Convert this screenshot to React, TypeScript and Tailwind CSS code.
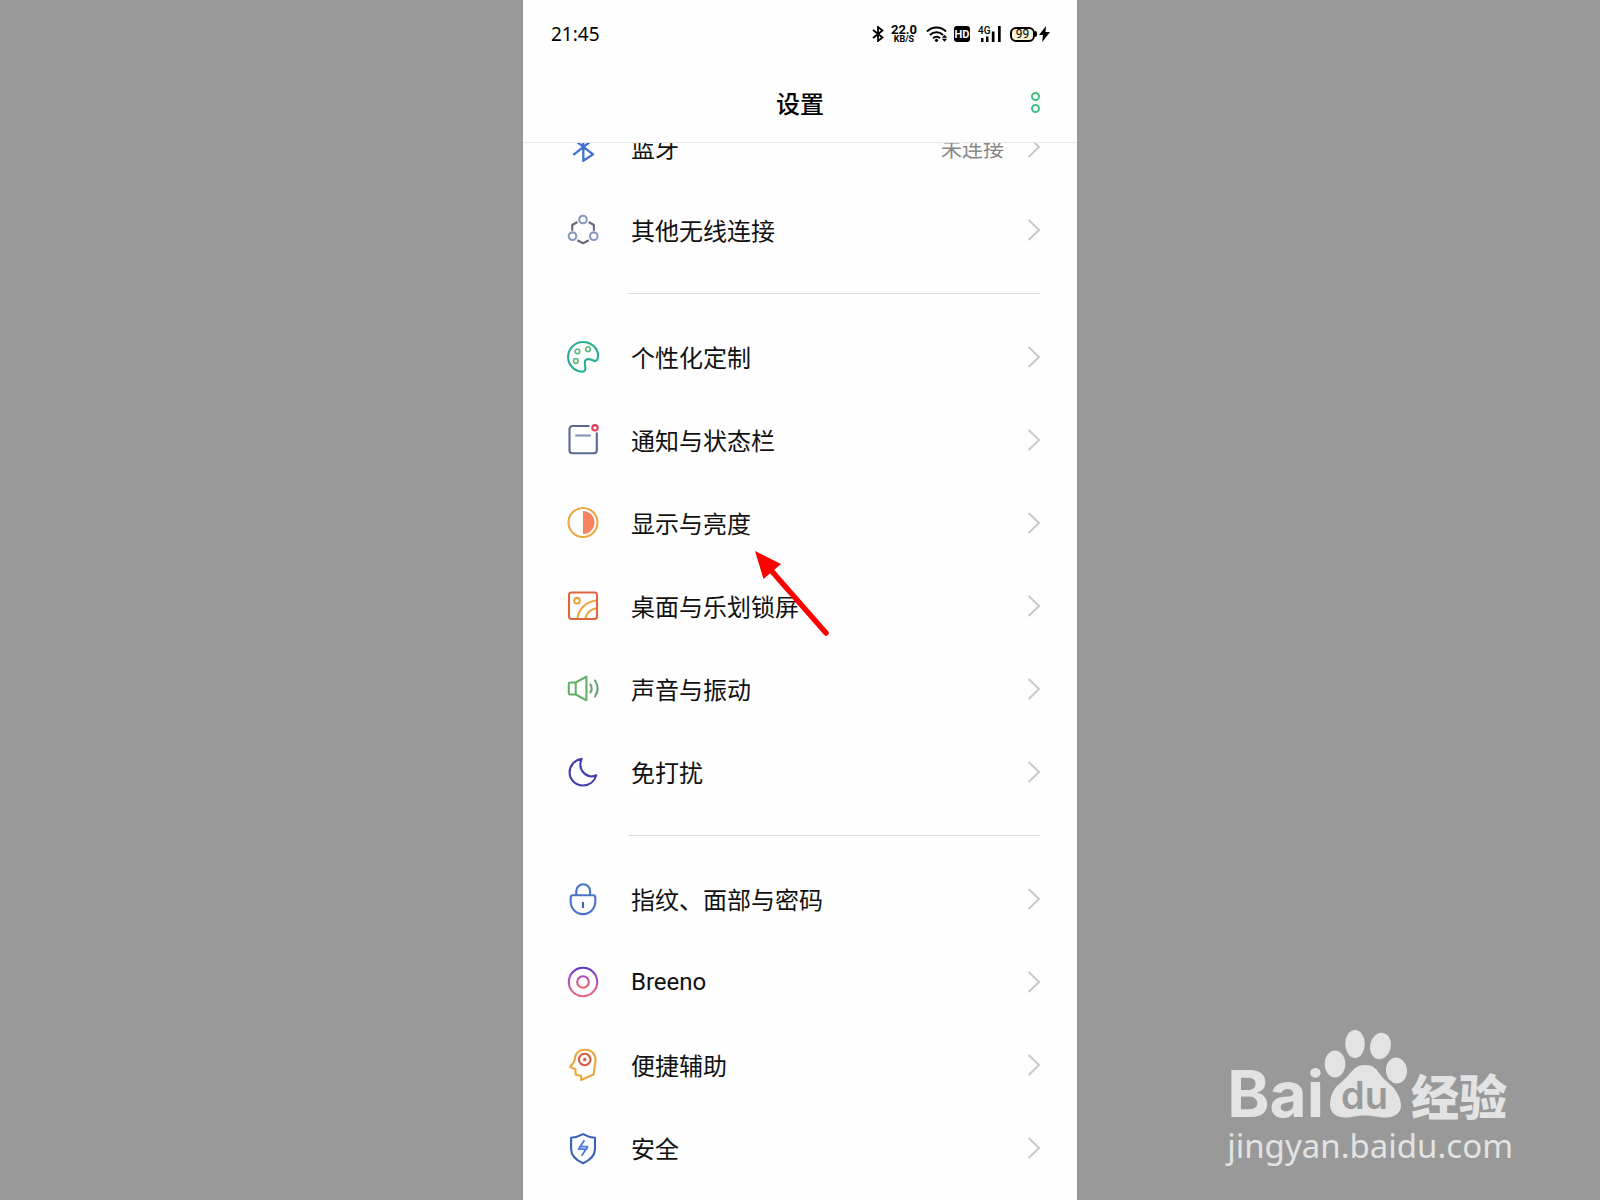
import React from 'react';
import { clsx } from 'clsx';

type IconProps = { children: React.ReactNode };

const Icon: React.FC<IconProps> = ({ children }) => (
  <svg className="size-8 shrink-0 overflow-visible" viewBox="0 0 32 32" fill="none" strokeWidth="2.1" strokeLinecap="round" strokeLinejoin="round" aria-hidden="true">
    {children}
  </svg>
);

const BluetoothIcon = () => (
  <Icon>
    <path stroke="#4570d3" strokeWidth="2.3" d="M7 8.5 26 23.4 16.3 29.8V1.5L26 8.5 7 23.4" />
  </Icon>
);

const WirelessIcon = () => (
  <Icon>
    <path stroke="#66697a" strokeLinecap="butt" d="M5.2 16.8V11l5.2-3M26.9 16.8V11l-5.2-3M10.3 26.3 16 29.2l5.8-2.9" />
    <g stroke="#8798bd">
      <circle cx="16" cy="5.5" r="3.8" />
      <circle cx="5.5" cy="22.2" r="3.8" />
      <circle cx="26.8" cy="22.2" r="3.8" />
    </g>
  </Icon>
);

const PaletteIcon = () => (
  <Icon>
    <path stroke="#25ae94" d="M14.8 30.7C7 30 1.1 23.7 1.1 16A14.9 14.9 0 0 1 16 1c8.4 0 15 6.4 15 13.6 0 4.6-1.9 6.4-4.6 4.9-4.2-2.3-8.6-1.9-8.6 2.2 0 2.6 1 4.3.4 6.8-.4 1.7-1.6 2.4-3.4 2.2Z" />
    <g stroke="#62bb86" strokeWidth="1.7">
      <circle cx="10.4" cy="10.4" r="2.3" />
      <circle cx="21" cy="8.2" r="2.3" />
      <circle cx="8.8" cy="20" r="2.3" />
    </g>
  </Icon>
);

const NotificationIcon = () => (
  <Icon>
    <path stroke="#5b6891" strokeLinecap="butt" d="M22.5 2h-17a3 3 0 0 0-3 3v21.3a3 3 0 0 0 3 3h21.3a3 3 0 0 0 3-3V8.5" />
    <path stroke="#8194bb" strokeLinecap="butt" d="M8.3 11.5h15.5" />
    <circle cx="28" cy="3.8" r="2.7" stroke="#d8405c" />
  </Icon>
);

const DisplayIcon = () => (
  <Icon>
    <circle cx="16" cy="15.5" r="14.5" stroke="#eaa840" />
    <path fill="#f6835f" d="M16 4a11.5 11.5 0 0 1 0 23Z" />
  </Icon>
);

const DesktopIcon = () => (
  <Icon>
    <g stroke="#eba63f">
      <circle cx="10" cy="10.7" r="2.8" />
      <path d="M10.5 28C12 19 19 11.5 29.5 10.5M18.5 28c1.5-5 5.5-9 11-9.8" />
    </g>
    <rect x="2" y="2.5" width="28" height="26.5" rx="2.5" stroke="#e0663f" />
  </Icon>
);

const SoundIcon = () => (
  <Icon>
    <path stroke="#62b166" d="M8.7 9.5 19.4 3.7v23.6L8.7 21.5M8.7 9.5H3a1.2 1.2 0 0 0-1.2 1.2v9.6A1.2 1.2 0 0 0 3 21.5h5.7Z" />
    <path stroke="#6b9f78" d="M23.4 11.5c1.7 2.6 1.7 5.4 0 8M28 7.5c3.3 5 3.3 11 0 16" />
  </Icon>
);

const MoonIcon = () => (
  <Icon>
    <path stroke="#433cab" d="M14.6 2.8C7.5 4 2.6 9.5 2.6 16.3c0 7.5 6 13.2 13.4 13.2 6.3 0 11.5-4 13.3-10.2-9.5 4.2-19.2-5.3-14.7-16.5Z" />
  </Icon>
);

const LockIcon = () => (
  <Icon>
    <path stroke="#4a73c8" d="M9.3 12.3V8.2a6.9 6.9 0 0 1 13.8 0v4.1M6.300 12.3H26a2.3 2.3 0 0 1 2.3 2.3v4.2a12.3 12.3 0 0 1-24.6 0v-4.2a2.3 2.3 0 0 1 2.3-2.3Z" />
    <path stroke="#3d62b4" strokeLinecap="butt" d="M16 19v6" />
  </Icon>
);

const BreenoIcon = () => (
  <Icon>
    <defs>
      <linearGradient id="breeno-outer" x1="0" y1="0" x2="0" y2="1">
        <stop offset="0" stopColor="#5c36c4" />
        <stop offset=".35" stopColor="#a74ccc" />
        <stop offset="1" stopColor="#e8697c" />
      </linearGradient>
      <linearGradient id="breeno-inner" x1="0" y1="0" x2="0" y2="1">
        <stop offset="0" stopColor="#a94bc2" />
        <stop offset="1" stopColor="#ea6a68" />
      </linearGradient>
    </defs>
    <circle cx="16" cy="16" r="14.2" stroke="url(#breeno-outer)" />
    <circle cx="16" cy="16" r="5.8" stroke="url(#breeno-inner)" />
  </Icon>
);

const AssistIcon = () => (
  <Icon>
    <path stroke="#eba640" d="M8 9.5C8 4.5 12 .8 18 .8c6.3 0 10.5 4 10.5 9.7 0 5.5-1.7 9-1.7 14.7L14.2 31v-4l-5.4-1.2-.5-5.6L3.2 18c1.5-2 3-3.6 3.6-5.2.4-1 1.2-1.8 1.2-3.3Z" />
    <circle cx="17.7" cy="10.5" r="5.8" stroke="#d95a40" />
    <circle cx="17.7" cy="10.5" r="1.7" fill="#d95a40" />
  </Icon>
);

const ShieldIcon = () => (
  <Icon>
    <path stroke="#3a62b8" d="M16 2.2c3.5 2 7.3 3.2 12 3.6V17c0 6.5-4.8 11-12 14.3C8.8 28 4.1 23.5 4.1 17V5.8C8.7 5.4 12.5 4.2 16 2.2Z" />
    <path stroke="#4b7be0" strokeWidth="1.8" d="M17 8.7 11.7 17.2h8M20.6 14.7h-8M20.6 14.7 15 23.2" />
  </Icon>
);

const Chevron = () => (
  <svg className="h-6 w-3 shrink-0" viewBox="0 0 12 24" fill="none" stroke="#c9c9c9" strokeWidth="2" strokeLinecap="round" strokeLinejoin="round" aria-hidden="true">
    <path d="M1.2 2.5 11 12 1.2 21.5" />
  </svg>
);

const Arrow = () => (
  <svg className="pointer-events-none absolute top-[69px] left-[232px] z-10 h-22 w-19" viewBox="0 0 76 88" aria-hidden="true">
    <path d="M14 18 71 83" stroke="#fd0000" strokeWidth="5.5" strokeLinecap="round" />
    <path d="M0 1 26 14 8.5 29Z" fill="#fd0000" />
  </svg>
);

type Setting = {
  label: string;
  icon: React.FC;
  value?: string;
  latin?: boolean;
  marked?: boolean;
};

const GROUPS: Setting[][] = [
  [
    { label: '蓝牙', icon: BluetoothIcon, value: '未连接' },
    { label: '其他无线连接', icon: WirelessIcon },
  ],
  [
    { label: '个性化定制', icon: PaletteIcon },
    { label: '通知与状态栏', icon: NotificationIcon },
    { label: '显示与亮度', icon: DisplayIcon, marked: true },
    { label: '桌面与乐划锁屏', icon: DesktopIcon },
    { label: '声音与振动', icon: SoundIcon },
    { label: '免打扰', icon: MoonIcon },
  ],
  [
    { label: '指纹、面部与密码', icon: LockIcon },
    { label: 'Breeno', icon: BreenoIcon, latin: true },
    { label: '便捷辅助', icon: AssistIcon },
    { label: '安全', icon: ShieldIcon },
  ],
];

const SettingRow: React.FC<{ item: Setting }> = ({ item }) => {
  const RowIcon = item.icon;
  return (
    <li className={clsx(item.marked && 'relative')}>
      <a href="#" className="flex h-[83px] items-center pr-[37px] pl-11">
        <RowIcon />
        <span className={clsx('ml-8 flex-1 text-[24px] leading-8 text-[#111]', item.latin && "font-['Roboto']")}>{item.label}</span>
        {item.value && <span className="mr-6 text-[21px] leading-8 text-[#888]">{item.value}</span>}
        <Chevron />
      </a>
      {item.marked && <Arrow />}
    </li>
  );
};

const StatusBar = () => (
  <div className="flex h-[68px] items-center justify-between pr-[27px] pl-7 text-black">
    <time className="font-['Noto_Sans'] text-[19px] leading-6">21:45</time>
    <div className="flex items-center font-['Roboto']">
      <svg className="h-4 w-3" viewBox="0 0 12 16" fill="none" stroke="currentColor" strokeWidth="1.8" aria-label="蓝牙">
        <path d="M1 4 10.500 11.5 6 15V1l4.5 3.5L1 12" />
      </svg>
      <div className="ml-[7px] flex w-[26px] flex-col items-center font-bold">
        <span className="text-[13px] leading-[10px]">22.0</span>
        <span className="text-[9px] leading-[9px]">KB/S</span>
      </div>
      <svg className="ml-[9px] h-4 w-[22px]" viewBox="0 0 22 16" fill="none" stroke="currentColor" strokeWidth="2" aria-label="Wi-Fi">
        <path d="M1 5.5c5.2-5.3 13.8-5.3 19 0M4 9c3.6-3.7 9.3-3.7 13 0M7 12.2c2-2.1 5-2.1 7 0" />
        <circle cx="10.5" cy="14.3" r="1.6" fill="currentColor" stroke="none" />
        <path fill="currentColor" stroke="none" d="m18.5 8.800 2.7 3h-5.4ZM18.5 15.800l2.7-3h-5.4Z" />
      </svg>
      <span className="ml-1.5 flex size-4 items-center justify-center rounded-[3px] bg-black text-[11px] leading-none font-bold text-white">HD</span>
      <svg className="ml-2 h-4 w-6 overflow-visible" viewBox="0 0 24 16" fill="currentColor" aria-label="4G">
        <text x="0" y="8" fontFamily="Roboto" fontSize="10" fontWeight="500">4G</text>
        <path d="M3 12h2.500v4H3ZM8 10.5h2.5V16H8ZM13.8 5.500h2.700V16h-2.7ZM20 0h2.7v16H20Z" />
      </svg>
      <div className="ml-2 flex h-[15px] w-[25px] items-center justify-center rounded-[6px] border-2 border-black bg-[#fbf3d8] text-[12px] leading-none">99</div>
      <span className="h-1.5 w-0.5 rounded-r-sm bg-black" />
      <svg className="ml-0.5 h-4 w-[11px]" viewBox="0 0 11 16" fill="currentColor" aria-hidden="true">
        <path d="M7 0 0 9h4L3.2 16 11 6H6.500Z" />
      </svg>
    </div>
  </div>
);

const Watermark = () => (
  <div className="absolute right-[87px] bottom-8 hidden text-[#e3e3e3] xl:block">
    <div className="flex items-baseline">
      <span className="font-['Inter'] text-[64px] leading-[60px] font-bold">Bai</span>
      <svg className="h-[89px] w-[83px] overflow-visible" viewBox="0 0 83 89" fill="currentColor">
        <ellipse cx="11" cy="36" rx="10.3" ry="13.5" />
        <ellipse cx="31" cy="16" rx="9.8" ry="14" />
        <ellipse cx="56.5" cy="18" rx="10.3" ry="13.3" transform="rotate(12 56.5 18)" />
        <ellipse cx="72.5" cy="42.5" rx="10.5" ry="13" transform="rotate(-5 72.5 42.5)" />
        <path d="M41 37c8 0 11 3.3 15 9.3 4 6 12 10 16 17 3 5 5 9 5 14.700 0 7-7 11.500-15 11.500-8 0-13-2-21-2s-13 2-20 2c-8 0-15-4.500-15-12.500 0-7 2-13 6-18 5-5 10-8 14-13.700 4-5 8-8.300 15-8.300Z" />
        <text x="17" y="81" fontFamily="Inter" fontSize="38" fontWeight="600" fill="#999">du</text>
      </svg>
      <span className="ml-1 self-end text-[48px] leading-[60px] font-black">经验</span>
    </div>
    <p className="font-['Noto_Sans'] text-[33px] leading-[44px]">jingyan.baidu.com</p>
  </div>
);

const App: React.FC = () => {
  return (
    <div className="relative flex min-h-screen justify-center bg-[#999] font-['Noto_Sans_CJK_SC',sans-serif]">
      <main className="w-full max-w-[554px] bg-[#fefefe]">
        <header className="border-b border-[#e8e8e8]">
          <StatusBar />
          <div className="grid h-[74px] grid-cols-[1fr_auto_1fr] items-center px-8 pb-[5px]">
            <h1 className="col-start-2 text-[24px] leading-8 font-medium text-black">设置</h1>
            <button type="button" aria-label="更多" className="flex flex-col items-center gap-[3px] justify-self-end p-[5px]">
              <span className="size-[9px] rounded-full border-2 border-[#40bf86]" />
              <span className="size-[9px] rounded-full border-2 border-[#40bf86]" />
            </button>
          </div>
        </header>

        {/* List is scrolled a little, so the first row runs under the header */}
        <div className="overflow-hidden pb-2.5">
          <div className="-mt-[38px]">
            {GROUPS.map((group, i) => (
              <React.Fragment key={i}>
                {i > 0 && <hr className="mt-[22px] mr-[37px] mb-[21px] ml-[105px] border-[#dcdcdc]" />}
                <ul>
                  {group.map((item) => (
                    <SettingRow key={item.label} item={item} />
                  ))}
                </ul>
              </React.Fragment>
            ))}
          </div>
        </div>
      </main>
      <Watermark />
    </div>
  );
};

export default App;
